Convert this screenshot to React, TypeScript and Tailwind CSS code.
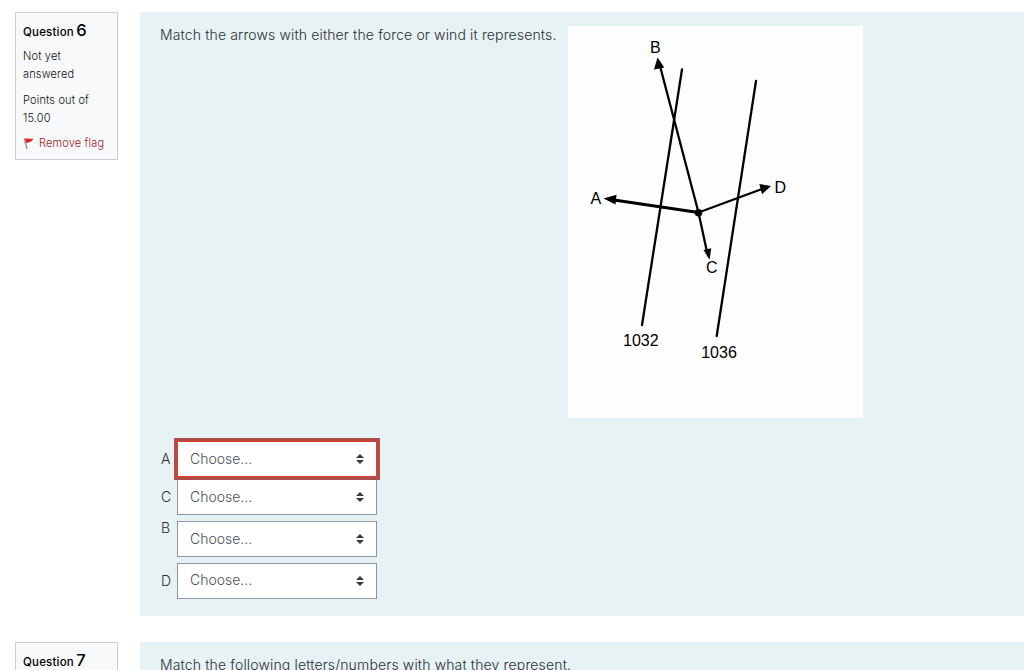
import type { ReactNode } from "react";

function FlagIcon() {
  return (
    <svg width="12" height="13" viewBox="0 0 12 13" className="shrink-0">
      <path d="M1.3 1.5 L4 11.8" stroke="#85898e" strokeWidth="1.3" />
      <path d="M1.8 1.4 L10.5 1.8 L8.5 4.2 L3.6 6.2 Z" fill="#e2231a" />
    </svg>
  );
}

function SortIcon() {
  return (
    <svg width="8" height="10" viewBox="0 0 8 10">
      <path d="M4 0 L8 4 H0 Z M0 6 H8 L4 10 Z" fill="#343a40" />
    </svg>
  );
}

function QuestionInfo({ number, flagged }: { number: number; flagged?: boolean }) {
  return (
    <div className="h-[148px] w-[103px] shrink-0 border border-[#cacdd6] bg-[#f8f9fb] pl-[7px] pt-[7px] text-[11px] font-light leading-[18px] tracking-[0.15px] text-[#111]">
      <h3 className="h-[20px] whitespace-nowrap text-[11.5px] font-medium leading-[20px] tracking-[0.2px] text-black">
        Question <span className="-ml-px text-[16.5px]">{number}</span>
      </h3>
      {flagged && (
        <>
          <div className="mt-[7px]">
            Not yet
            <br />
            answered
          </div>
          <div className="mt-[8px]">
            Points out of
            <br />
            15.00
          </div>
          <div className="mt-[7px] flex items-center gap-[4px] whitespace-nowrap text-[#a01818]">
            <FlagIcon />
            <span>Remove flag</span>
          </div>
        </>
      )}
    </div>
  );
}

function Question({ number, flagged, children }: { number: number; flagged?: boolean; children: ReactNode }) {
  return (
    <section className="flex gap-[22px] pl-[15px]">
      <QuestionInfo number={number} flagged={flagged} />
      <div className="h-[604px] flex-1 bg-[#e7f2f4] pl-5 pt-[14px]">{children}</div>
    </section>
  );
}

function Diagram() {
  return (
    <svg width="295" height="392" viewBox="0 0 295 392" className="shrink-0 bg-[#fefefe]">
      <g stroke="#000" strokeWidth="2.3" strokeLinecap="round">
        <path d="M114 43.5 L74 299" />
        <path d="M188 55 L148.7 310" />
        <path d="M130.5 186.5 L92 40" />
        <path d="M130.5 186.5 L139 226" />
        <path d="M130.5 186.5 L194 163" />
        <path d="M130.5 186.5 L46 174" strokeWidth="3" />
      </g>
      <circle cx="130.5" cy="186.8" r="3.8" />
      <path d="M89.5 31.5 L96.3 41.5 L86 43.5 Z" />
      <path d="M35.5 172.5 L48.5 168.8 L47.5 178.5 Z" />
      <path d="M203 160 L191.3 158 L194 168.3 Z" />
      <path d="M141.5 233.7 L135.5 224 L143.3 222.2 Z" />
      <g fontFamily="Liberation Sans, sans-serif" fontSize="16" fill="#000">
        <text x="82" y="27">B</text>
        <text x="22.5" y="178">A</text>
        <text x="206.5" y="167">D</text>
        <text x="138" y="247">C</text>
        <text x="55" y="320">1032</text>
        <text x="133.2" y="332">1036</text>
      </g>
    </svg>
  );
}

function Choice({ label, className = "", labelClass = "", wrong }: { label: string; className?: string; labelClass?: string; wrong?: boolean }) {
  return (
    <div className={`flex ${className}`}>
      <span className={`w-[17px] pl-px leading-9 ${labelClass}`}>{label}</span>
      <div
        className={`flex h-9 w-[200px] items-center justify-between border bg-white pl-3 pr-[12px] text-[#495057] ${
          wrong ? "relative z-10 border-[#e8392c] outline-[3px] outline-[#ad4d48]" : "border-[#8f959e]"
        }`}
      >
        <span className="pb-[2px]">Choose...</span>
        <SortIcon />
      </div>
    </div>
  );
}

export default function App() {
  return (
    <main className="flex h-[670px] w-[1024px] flex-col gap-[26px] overflow-hidden bg-white pt-3 font-['Inter',sans-serif] text-[14px] font-light text-[#2b3035]">
      <Question number={6} flagged>
        <div className="flex">
          <p className="w-[408px] whitespace-nowrap leading-[18px] tracking-[0.14px]">
            Match the arrows with either the force or wind it represents.
          </p>
          <Diagram />
        </div>
        <div className="mt-[23px]">
          <Choice label="A" wrong />
          <Choice label="C" className="mt-[2px]" />
          <Choice label="B" className="mt-[6px]" labelClass="-mt-[11px]" />
          <Choice label="D" className="mt-[5.5px]" />
        </div>
      </Question>
      <Question number={7}>
        <p className="whitespace-nowrap leading-[18px] tracking-[0.15px]">
          Match the following letters/numbers with what they represent.
        </p>
      </Question>
    </main>
  );
}
